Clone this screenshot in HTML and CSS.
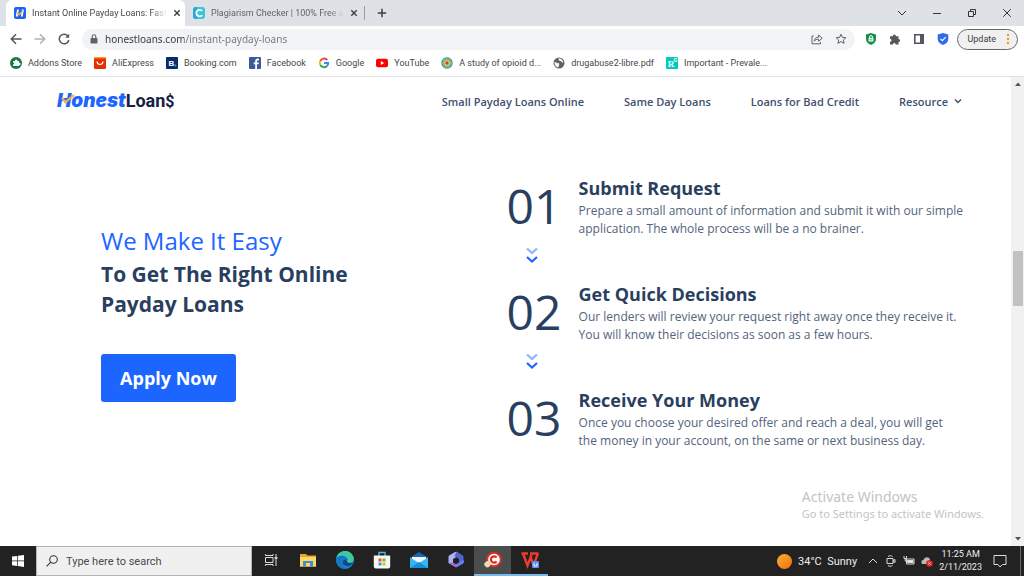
FILE: index.html
```html
<!DOCTYPE html>
<html lang="en">

<head>
    <meta charset="UTF-8">
    <meta name="viewport" content="width=device-width, initial-scale=1.0">
    <title>Instant Online Payday Loans</title>
    <link rel="stylesheet" href="styles.css">
</head>
<body>
    <header class="browser">
        <div class="tabs">
            <div class="tab active">
                <svg class="fav" viewBox="0 0 12 12"><rect width="12" height="12" rx="2" fill="#1f63f5"/><path d="M4 2.5 2.7 9.5M9 2.5 7.7 9.5" stroke="#fff" stroke-width="1.8"/><path d="m3 6 2 1.8 4-4" fill="none" stroke="#f5b73b" stroke-width="1.4"/></svg>
                <span class="tab-title">Instant Online Payday Loans: Fast</span>
                <button class="tab-x" aria-label="Close tab"><svg viewBox="0 0 8 8"><path d="m1.3 1.3 5.4 5.4m0-5.4L1.3 6.7"/></svg></button>
            </div>
            <div class="tab">
                <svg class="fav" viewBox="0 0 12 12"><rect width="12" height="12" rx="3" fill="#3cc5d8"/><path d="M0 3a3 3 0 0 1 3-3h1v12H3a3 3 0 0 1-3-3z" fill="#28a9cf"/><path d="M9.2 4A3.3 3.3 0 1 0 9.2 8.2" fill="none" stroke="#fff" stroke-width="1.8"/></svg>
                <span class="tab-title">Plagiarism Checker | 100% Free a</span>
                <button class="tab-x" aria-label="Close tab"><svg viewBox="0 0 8 8"><path d="m1.3 1.3 5.4 5.4m0-5.4L1.3 6.7"/></svg></button>
            </div>
            <button class="new-tab" aria-label="New tab"><svg viewBox="0 0 10 10"><path d="M5 .8v8.4M.8 5h8.4"/></svg></button>
            <div class="win">
                <button aria-label="Search tabs"><svg viewBox="0 0 10 10"><path d="m1 3 4 4 4-4"/></svg></button>
                <button aria-label="Minimize"><svg viewBox="0 0 10 10"><path d="M1 5.5h8"/></svg></button>
                <button aria-label="Restore"><svg viewBox="0 0 10 10"><path d="M1.5 3.5h5v5h-5zM3.5 3V1.5h5v5H7"/></svg></button>
                <button aria-label="Close"><svg viewBox="0 0 10 10"><path d="m1.2 1.2 7.6 7.6m0-7.6L1.2 8.8"/></svg></button>
            </div>
        </div>

        <div class="toolbar">
            <button aria-label="Back"><svg class="stroke" viewBox="0 0 12 12"><path d="M11.5 6h-10M6 1.3 1.3 6 6 10.7"/></svg></button>
            <button class="off" aria-label="Forward"><svg class="stroke" viewBox="0 0 12 12"><path d="M.5 6h10M6 1.3 10.7 6 6 10.7"/></svg></button>
            <button aria-label="Reload"><svg class="stroke" viewBox="0 0 12 12"><path d="M10.3 3.6A4.8 4.8 0 1 0 10.8 7"/><path d="M11.2.8v4H7.2z" fill="#54575b" stroke="none"/></svg></button>
            <div class="omnibox">
                <svg class="lock" viewBox="0 0 8 10"><rect x=".5" y="4" width="7" height="5.5" rx=".8" fill="#5f6368"/><path d="M2.2 4V2.6a1.8 1.8 0 0 1 3.6 0V4" fill="none" stroke="#5f6368" stroke-width="1.1"/></svg>
                <input class="url" type="text" aria-label="Address" value="honestloans.com/instant-payday-loans">
                <button aria-label="Share"><svg class="thin" viewBox="0 0 12 12"><path d="M2.8 3H1v7.8h8.500V9M3.2 8.2c.3-2.6 1.8-4 4.400-4V2l3.600 3.200-3.600 3.100V6.200c-2 0-3.300.5-4.400 2z"/></svg></button>
                <button aria-label="Bookmark"><svg class="thin" viewBox="0 0 12 12"><path d="m6 1.2 1.4 3.2 3.5.3-2.6 2.3.8 3.4L6 8.6l-3.1 1.8.8-3.4L1.1 4.7l3.5-.3z"/></svg></button>
            </div>
            <button aria-label="Secure extension"><svg viewBox="0 0 12 12"><path d="M6 0 11 1.500V6c0 3-2.200 5-5 6C3.200 11 1 9 1 6V1.500z" fill="#14914c"/><rect x="3.600" y="5" width="4.800" height="3.600" rx=".6" fill="#fff"/><path d="M4.600 5V4a1.400 1.400 0 0 1 2.800 0v1" fill="none" stroke="#fff"/><path d="M4.600 6.800h2.800" stroke="#14914c" stroke-width=".8"/></svg></button>
            <button aria-label="Extensions"><svg viewBox="0 0 12 12"><path d="M1 3.200h2.700a1.600 1.600 0 1 1 3.200 0h2.600v2.700a1.600 1.600 0 1 1 0 3.200v2.400H6.800a1.500 1.500 0 1 0-3 0H1V8.700a1.500 1.500 0 1 0 0-3z" fill="#54575b"/></svg></button>
            <button aria-label="Side panel"><svg viewBox="0 0 12 12"><path d="M1 1h10v10H1zm1.600 1.600v6.800H7V2.600z" fill="#54575b" fill-rule="evenodd"/></svg></button>
            <button aria-label="Shield"><svg viewBox="0 0 12 12"><path d="M6 0 11.300 1.500V6c0 3-2.500 5-5.300 6C3.200 11 .7 9 .7 6V1.500z" fill="#2f6bea"/><path d="m3.500 5.800 1.900 1.900 3.300-3.500" fill="none" stroke="#fff" stroke-width="1.200"/></svg></button>
            <button class="update">Update <svg viewBox="0 0 4 12"><g fill="#f29a1f"><circle cx="2" cy="2" r="1.200"/><circle cx="2" cy="6" r="1.200"/><circle cx="2" cy="10" r="1.200"/></g></svg></button>
        </div>

        <nav class="bookmarks" aria-label="Bookmarks">
            <a href="#"><svg viewBox="0 0 12 12"><circle cx="6" cy="6" r="6" fill="#137a43"/><path d="M3 4h2a1.200 1.200 0 1 1 2.300 0H9v1.800a1.200 1.200 0 1 1 0 2.300V9H3V7.600a1 1 0 1 0 0-2z" fill="#fff"/></svg>Addons Store</a>
            <a href="#"><svg viewBox="0 0 12 12"><rect width="12" height="12" rx="1.500" fill="#e62e04"/><path d="M0 1.500A1.500 1.500 0 0 1 1.500 0h9A1.500 1.500 0 0 1 12 1.500z" fill="#f7971d"/><path d="M3 4.500c.4 4 5.600 4 6 0" fill="none" stroke="#fff" stroke-width="1.200"/></svg>AliExpress</a>
            <a href="#"><svg viewBox="0 0 12 12"><rect width="12" height="12" rx="1" fill="#0c2a6b"/><text x="2.500" y="9.300" class="b-letter">B</text><circle cx="9.500" cy="8.500" r=".9" fill="#19b1f0"/></svg>Booking.com</a>
            <a href="#"><svg viewBox="0 0 12 12"><rect width="12" height="12" rx="1" fill="#3d5a99"/><path d="M8 12V7.300h1.600l.3-1.800H8V4.300c0-.6.2-.9 1-.9h1V1.700C7.400 1.300 6.200 2.200 6.200 4v1.500H4.700v1.800h1.500V12z" fill="#fff"/></svg>Facebook</a>
            <a href="#"><svg viewBox="0 0 12 12"><g fill="none" stroke-width="1.900"><path d="M9.300 3A4.200 4.200 0 0 0 2.300 4" stroke="#e94335"/><path d="M2.300 4a4.200 4.200 0 0 0 0 4" stroke="#fabb05"/><path d="M2.300 8a4.200 4.200 0 0 0 6.500 1.200" stroke="#34a853"/><path d="M6 6h4.200a4.200 4.200 0 0 1-1.400 3.200" stroke="#4285f4"/></g></svg>Google</a>
            <a href="#"><svg viewBox="0 0 12 12"><rect y="1.700" width="12" height="8.600" rx="2" fill="#f00"/><path d="m4.800 4.100 3.300 1.900-3.300 1.900z" fill="#fff"/></svg>YouTube</a>
            <a href="#"><svg viewBox="0 0 12 12"><circle cx="6" cy="6" r="5.700" fill="#2f8dbb"/><circle cx="6" cy="6" r="4.200" fill="#86bf4a" stroke="#b9d54f" stroke-dasharray="2 1"/><circle cx="6" cy="6" r="2.500" fill="#f2d9a0"/><circle cx="6" cy="6" r="1.700" fill="#dc3b30"/></svg>A study of opioid d...</a>
            <a href="#"><svg viewBox="0 0 12 12"><circle cx="6" cy="6" r="5.500" fill="#5f6368"/><path d="M1.500 5c2 .2 2.500 1.500 4.500 1.300 1 1-.5 1.500 0 2.500L5 10.500C2.800 10 1.300 8 1.500 5zM5 1.700c1.500 1 .5 2 2.500 2.300 1 .2.500 1.500 2.800 1.500-.2-2-1.700-4-4.300-4z" fill="#fff"/></svg>drugabuse2-libre.pdf</a>
            <a href="#"><svg viewBox="0 0 12 12"><rect width="12" height="12" rx="1" fill="#00ccbb"/><text x="1.800" y="10" class="r-letter">R</text><text x="7.600" y="5" class="g-letter">G</text></svg>Important - Prevale...</a>
        </nav>
    </header>

    <div class="page">
        <div class="site">
            <header class="site-head">
                <a class="logo" href="#"><span class="honest">Honest</span><span class="loan">Loan<small>$</small></span><svg class="tick" viewBox="0 0 14 12"><path d="m1 5 3.500 4.200L13 2" fill="none" stroke="#f7b538" stroke-width="2.200"/></svg></a>
                <nav class="menu">
                    <a href="#">Small Payday Loans Online</a>
                    <a href="#">Same Day Loans</a>
                    <a href="#">Loans for Bad Credit</a>
                    <a href="#">Resource <svg viewBox="0 0 8 8"><path d="m1 2.500 3 3 3-3"/></svg></a>
                </nav>
            </header>

            <main class="easy">
                <section class="intro">
                    <h2><span>We Make It Easy</span>To Get The Right Online<br>Payday Loans</h2>
                    <button class="apply">Apply Now</button>
                </section>
                <section class="steps">
                    <div class="step">
                        <div class="num">01<svg viewBox="0 0 12 16"><path d="m1 1.500 5 4.500 5-4.500" stroke="#8fb3ff"/><path d="m1 10 5 4.500 5-4.500" stroke="#1c66ff"/></svg></div>
                        <div>
                            <h3>Submit Request</h3>
                            <p>Prepare a small amount of information and submit it with our simple<br>application. The whole process will be a no brainer.</p>
                        </div>
                    </div>
                    <div class="step">
                        <div class="num">02<svg viewBox="0 0 12 16"><path d="m1 1.500 5 4.500 5-4.500" stroke="#8fb3ff"/><path d="m1 10 5 4.500 5-4.500" stroke="#1c66ff"/></svg></div>
                        <div>
                            <h3>Get Quick Decisions</h3>
                            <p>Our lenders will review your request right away once they receive it.<br>You will know their decisions as soon as a few hours.</p>
                        </div>
                    </div>
                    <div class="step">
                        <div class="num">03</div>
                        <div>
                            <h3>Receive Your Money</h3>
                            <p>Once you choose your desired offer and reach a deal, you will get<br>the money in your account, on the same or next business day.</p>
                        </div>
                    </div>
                </section>
            </main>
        </div>
        <div class="scroll">
            <svg viewBox="0 0 8 8"><path d="m1 6 3-3.500L7 6z"/></svg>
            <div class="track"><div class="thumb"></div></div>
            <svg viewBox="0 0 8 8"><path d="m1 2 3 3.500L7 2z"/></svg>
        </div>
        <div class="activate"><strong>Activate Windows</strong>Go to Settings to activate Windows.</div>
    </div>

    <footer class="taskbar">
        <button class="start" aria-label="Start"><svg viewBox="0 0 12 12"><path d="M0 1.600 5.300.9v4.700H0zM6 .8 12 0v5.600H6zM0 6.300h5.300V11L0 10.300zM6 6.300h6V12l-6-.9z" fill="#fff"/></svg></button>
        <label class="search">
            <svg viewBox="0 0 12 12"><circle cx="7.500" cy="4.500" r="3.800"/><path d="M4.800 7.200.6 11.400"/></svg>
            <input type="text" placeholder="Type here to search" aria-label="Type here to search">
        </label>
        <div class="apps">
            <button aria-label="Task view"><svg class="view" viewBox="0 0 14 14"><path d="M1.500 4.500h7.500v5H1.500zM1.500 1v1.500h7.500V1M1.500 13v-1.500h7.500V13M12 1v2.500M12 6.500V13"/><path d="M11 4.200h2v1.600h-2z" fill="#ddd"/></svg></button>
            <button aria-label="File Explorer"><svg viewBox="0 0 18 18"><path d="M1 3h6l1.500 1.500H17v11H1z" fill="#e9a520"/><path d="M1 6h16v9.500H1z" fill="#ffd767"/><path d="M4 15.500V10h10v5.500h-3V12H7v3.500z" fill="#3b8fd8"/></svg></button>
            <button aria-label="Edge"><svg viewBox="0 0 18 18"><circle cx="9" cy="9" r="9" fill="#1489d8"/><path d="M.3 7C2-1 14-3 17.500 6c1.300 4-2 6.500-5.500 5.500-1-.5-1.500-1 0-2.500C12 6 5 2.500.3 7z" fill="#40c9a0"/><path d="M.3 7C5 3 11 5 11 9 8 7 5 10 7 14c1 2 3 3.300 5 3.500C5 19.500-1 14 .3 7z" fill="#1878c8"/><path d="M7 13c-1-3 1-5 3.500-4.500-.5 3 2 4.500 6.500 3-1.500 4-7 5-10 1.500z" fill="#17457f"/></svg></button>
            <button aria-label="Store"><svg viewBox="0 0 18 18"><path d="M6 5V1.500h6V5" fill="none" stroke="#53b4e8" stroke-width="1.400"/><path d="M.8 4.500h16.400v11a2 2 0 0 1-2 2H2.800a2 2 0 0 1-2-2z" fill="#f3f5f6"/><path d="M5.500 7.500h3v3h-3z" fill="#ef5026"/><path d="M9.500 7.500h3v3h-3z" fill="#7cb82f"/><path d="M5.500 11.500h3v3h-3z" fill="#2a9fe5"/><path d="M9.500 11.500h3v3h-3z" fill="#f9b51c"/></svg></button>
            <button aria-label="Mail"><svg viewBox="0 0 18 18"><path d="M0 6.500 9 1l9 5.500V17H0z" fill="#1467b4"/><path d="M2 6h14v6H2z" fill="#f2f7fa"/><path d="M0 6.500 9 12l9-5.500V17H0z" fill="#36b5ee"/><path d="m0 17 9-6 9 6z" fill="#178cd8"/></svg></button>
            <button aria-label="Microsoft 365"><svg viewBox="0 0 18 18"><path d="M8 1 2.500 4.200Q1.500 5 1.500 6v6l4.500 2.500V8l5-3V1.500Q9.500.2 8 1z" fill="#a9b4f2"/><path d="m9.500.8 6 3.500q1 .7 1 2V12L12 14.200V8L7.500 5z" fill="#4e66cf"/><path d="M1.500 12 8 16q1 .6 2 0l6-3.500q.6-.5.5-1.500V9L10 12.800q-1 .5-2 0L6 11.500z" fill="#a865d5"/><path d="m10 12.800 6.500-3.800v2.500q0 .7-.6 1L10 16z" fill="#5d80e8"/></svg></button>
            <button class="on" aria-label="CCleaner"><svg viewBox="0 0 18 18"><circle cx="10" cy="8.500" r="7.800" fill="#d83025"/><circle cx="10" cy="8.500" r="5.800" fill="#fff"/><path d="M12.600 6.500A3.200 3.200 0 1 0 12.600 10.500" fill="none" stroke="#d83025" stroke-width="2.200"/><path d="M0 13c3-4 5-4 8-1l-3 4c-2 1-4 0-5-3z" fill="#f3d9b2"/></svg></button>
            <button class="open" aria-label="WPS Office"><svg viewBox="0 0 18 18"><path d="M.5 2.500h6.500M2 2.500l4.500 12L10.500 4M9 2.500h8.500M9.500 6l3 8 4.500-11.500" fill="none" stroke="#ee3a2f" stroke-width="2.400"/><rect x="11" y="10" width="7" height="7" rx="1" fill="#5b8cf0"/><path d="M13 12v3h3v-3" fill="none" stroke="#fff"/></svg></button>
        </div>
        <div class="tray">
            <span class="sun"></span>
            <span class="weather">34°C&nbsp; Sunny</span>
            <svg viewBox="0 0 12 12"><path d="m2 8 4-4 4 4"/></svg>
            <svg viewBox="0 0 12 12"><path d="M2 3.500h6v5H2zM8 5.500l2-1v3l-2-1M3 1.500c1.500-1 3-1 4.500 0M3 10.500c1.500 1 3 1 4.500 0"/></svg>
            <svg viewBox="0 0 12 12"><path d="M3.500 4H11v5H3.500z"/><path d="M4.500 5.500H10v2H4.500z" fill="#eee"/><path d="M1 1v2.500h2.500V1M2.200 3.500V6H4"/></svg>
            <svg viewBox="0 0 12 12"><path d="M1 9c-1.500-3 0-4 1.500-4C3.500 1.500 8 1.500 9 4.500L6 9z" fill="#b8b8b8" stroke="none"/><circle cx="8.500" cy="8.500" r="3.300" fill="#e02424" stroke="none"/><path d="m7.400 7.400 2.200 2.200m0-2.200L7.400 9.600"/></svg>
            <time>11:25 AM<br>2/11/2023</time>
            <button class="note" aria-label="Notifications"><svg viewBox="0 0 14 14"><path d="M1 1.500h12v9H9.500L7 13l-2-2.500H1z"/></svg></button>
        </div>
    </footer>
</body>

</html>
```

FILE: styles.css
```css
*, *:before, *:after {box-sizing: border-box;}
* {margin: 0;padding: 0;}
html, body {height: 100%;}
body {display: flex;flex-direction: column;overflow: hidden;background: #fff;font-family: "Open Sans", sans-serif;}
a {color: inherit;text-decoration: none;}
button {display: flex;align-items: center;justify-content: center;border: none;background: none;font-family: inherit;cursor: pointer;}
input {border: none;outline: none;background: none;font-family: inherit;min-width: 0;}
svg {display: block;flex: none;width: 12px;height: 12px;}

/* browser window */
.browser {font-family: Roboto, "Noto Sans", sans-serif;border-bottom: 1px solid #dfe1e3;color: #45484c;}
.tabs {display: flex;align-items: center;height: 26px;padding-left: 6px;background: #dee1e6;}
.tab {display: flex;align-items: center;gap: 6px;width: 179px;height: 26px;padding: 0 8px;font-size: 9px;color: #5f6368;}
.tab.active {background: #fff;border-radius: 6px 6px 0 0;color: #45484c;}
.tab-title {flex: 1;white-space: nowrap;-webkit-mask-image: linear-gradient(90deg, #000 88%, transparent);mask-image: linear-gradient(90deg, #000 88%, transparent);}
.tab-x svg {width: 8px;height: 8px;stroke: #3c4043;stroke-width: 1.4;}
.new-tab {height: 14px;padding-left: 12px;border-left: 1px solid #9a9da1;}
.new-tab svg {width: 10px;height: 10px;stroke: #3c4043;stroke-width: 1.5;}
.win {display: flex;margin-left: auto;}
.win button {width: 35px;height: 22px;}
.win svg {width: 10px;height: 10px;fill: none;stroke: #333;stroke-width: 1;}
.toolbar {display: flex;align-items: center;gap: 12px;height: 26px;padding: 0 6px 0 10px;}
.stroke {fill: none;stroke: #54575b;stroke-width: 1.5;}
.thin {fill: none;stroke: #5f6368;stroke-width: 1;}
.off {opacity: .45;}
.omnibox {display: flex;align-items: center;gap: 12px;flex: 1;height: 21px;margin-right: -2px;padding: 0 8px;border-radius: 11px;background: #f1f3f4;}
.lock {width: 8px;height: 10px;margin-right: -5px;}
.url {flex: 1;font-family: "Noto Sans", sans-serif;font-size: 10px;color: transparent;background: linear-gradient(90deg, #333639 79px, #73777b 79px);-webkit-background-clip: text;background-clip: text;}
.update {gap: 10px;height: 21px;margin-left: -4px;padding: 0 7px 0 9px;border: 1px solid #66696c;border-radius: 11px;background: #f0f0f0;font-size: 9px;color: #3c4043;}
.update svg {width: 4px;}
.bookmarks {display: flex;align-items: center;gap: 12px;height: 24px;padding: 0 10px 2px;font-size: 9px;white-space: nowrap;}
.bookmarks a {display: flex;align-items: center;gap: 6px;}
.b-letter {font: bold 8px "Liberation Sans", sans-serif;fill: #fff;}
.r-letter {font: bold 9px "Liberation Serif", serif;fill: #fff;}
.g-letter {font: bold 5px "Liberation Sans", sans-serif;fill: #fff;}

/* site */
.page {position: relative;display: flex;flex: 1;min-height: 0;}
.site {display: flex;flex-direction: column;flex: 1;}
.site-head {display: flex;align-items: center;justify-content: space-between;height: 48px;padding: 0 49px 0 57px;}
.logo {position: relative;display: flex;align-items: baseline;padding-top: 1px;line-height: 24px;}
.honest {font-family: Inter, sans-serif;font-size: 19px;font-weight: 900;font-style: italic;color: #1c66ff;}
.loan {font-family: Roboto, sans-serif;font-size: 18px;font-weight: 700;color: #17213f;}
.loan small {font-size: 16px;}
.tick {position: absolute;top: 5px;left: 4px;width: 14px;height: 12px;}
.menu {display: flex;gap: 40px;font-size: 11px;font-weight: 600;color: #3f5070;}
.menu a {display: flex;align-items: center;gap: 6px;}
.menu svg {width: 8px;height: 8px;fill: none;stroke: #3f5070;stroke-width: 1.5;}
.easy {display: grid;grid-template-columns: 8fr 9fr;align-items: center;flex: 1;padding: 0 48px 46px 101px;color: #2a3f5f;}
.intro h2 {font-size: 21px;font-weight: 700;line-height: 30px;}
.intro h2 span {display: block;font-size: 24px;font-weight: 400;line-height: 36px;color: #1c66ff;}
.apply {width: 135px;height: 48px;margin-top: 35px;border-radius: 3px;background: #1c66ff;font-size: 18px;font-weight: 700;color: #fff;}
.steps {display: flex;flex-direction: column;gap: 19px;}
.step {display: flex;gap: 22px;white-space: nowrap;}
.num {width: 50px;font-size: 48px;line-height: 60px;}
.num svg {width: 12px;height: 16px;margin: 11px auto 0;fill: none;stroke-width: 2.2;}
.step h3 {margin-bottom: 2px;font-size: 18px;line-height: 24px;}
.step p {font-size: 12px;line-height: 18px;color: #53647c;}
.scroll {display: flex;flex-direction: column;align-items: center;width: 13px;padding: 3px 0;background: #f1f1f1;}
.scroll svg {width: 8px;height: 8px;fill: #555;}
.track {flex: 1;width: 10px;padding-top: 163px;}
.thumb {height: 55px;background: #c1c1c1;}
.activate {position: absolute;right: 40px;bottom: 24px;font-family: "Noto Sans", sans-serif;font-size: 11px;line-height: 16px;color: #c2c4c6;}
.activate strong {display: block;font-size: 14px;font-weight: 400;line-height: 18px;}

/* taskbar */
.taskbar {display: flex;align-items: center;height: 30px;background: #222;font-family: Roboto, "Noto Sans", sans-serif;color: #eee;}
.start {width: 36px;height: 30px;}
.search {display: flex;align-items: center;gap: 8px;width: 216px;height: 30px;padding: 0 9px;border: 1px solid #b5b5b5;background: #f0f0f0;}
.search svg {fill: none;stroke: #333;stroke-width: 1.1;}
.search input {flex: 1;font-size: 11px;color: #333;}
.search input::placeholder {color: #4a4a4a;opacity: 1;}
.apps {display: flex;}
.apps button {width: 37px;height: 30px;border-bottom: 2px solid transparent;}
.apps svg {width: 18px;height: 18px;}
.apps .view {width: 14px;height: 14px;fill: none;stroke: #ddd;}
.apps .on {border-color: #76b9ed;background: #4b4d4c;}
.apps .open {border-color: #76b9ed;}
.tray {display: flex;align-items: center;gap: 6px;height: 30px;margin-left: auto;margin-right: 3px;padding-right: 13px;border-right: 1px solid #666;font-size: 11px;}
.tray svg {fill: none;stroke: #ddd;stroke-width: 1;}
.sun {width: 15px;height: 15px;border-radius: 50%;background: linear-gradient(135deg, #fbb034, #f0700f);}
.weather {margin-right: 4px;white-space: nowrap;}
time {font-size: 9px;line-height: 13px;text-align: center;}
.note {margin-left: 5px;}
.note svg {width: 14px;height: 14px;}
```
